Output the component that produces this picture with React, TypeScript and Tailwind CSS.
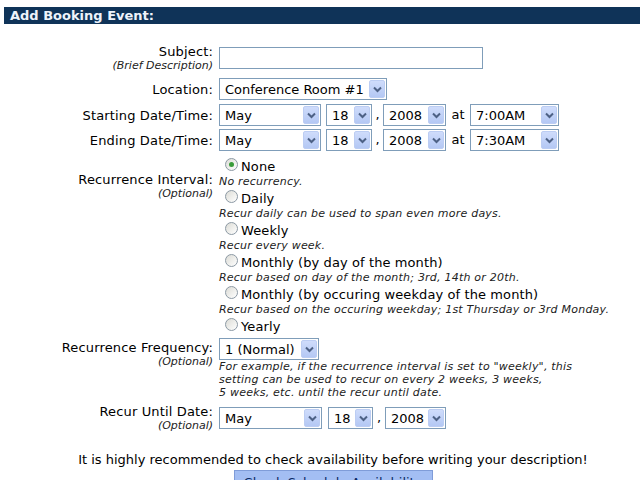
import React from "react";

const F = { fontFamily: '"DejaVu Sans", Verdana, sans-serif' };

function Chevron() {
  return (
    <svg width="9" height="7" viewBox="0 0 9 7">
      <path d="M1 1.5 L4.5 5 L8 1.5" fill="none" stroke="#4d6185" strokeWidth="2" />
    </svg>
  );
}

function Select({ value, w }: { value: string; w: string }) {
  return (
    <div className={`${w} h-[22px] border border-[#7f9db9] bg-white flex items-center justify-between shrink-0`}>
      <span className="pl-[5px] text-[13px] leading-[15px] text-black whitespace-nowrap">{value}</span>
      <div className="w-[16px] h-[18px] mr-[1px] bg-gradient-to-b from-[#cfdcfb] to-[#b4c8f4] border border-[#bccdf3] flex items-center justify-center rounded-[2px]">
        <Chevron />
      </div>
    </div>
  );
}

function Radio({ checked, label }: { checked?: boolean; label: string }) {
  return (
    <div className="flex items-end h-[17px]">
      <div className="ml-[6px] mr-[3px] mb-[3px] w-[13px] h-[13px] rounded-full border border-[#8c99a4] bg-gradient-to-br from-[#dcdcd6] to-white flex items-center justify-center">
        {checked && <div className="w-[5px] h-[5px] rounded-full bg-[#3a9c3a]" />}
      </div>
      <span className="text-[13px] leading-[15px] tracking-[0.1px] text-black">{label}</span>
    </div>
  );
}

function Desc({ children }: { children: React.ReactNode }) {
  return <div className="text-[11px] leading-[15px] italic tracking-[0.22px] text-[#222]">{children}</div>;
}

function Label({ main, sub, className = "" }: { main: string; sub?: string; className?: string }) {
  return (
    <div className={`w-[213px] shrink-0 text-right ${className}`}>
      <div className="text-[13px] leading-[15px] tracking-[0.15px] text-black">{main}</div>
      {sub && <div className="text-[11px] leading-[13px] italic text-[#222]">{sub}</div>}
    </div>
  );
}

export default function App() {
  return (
    <div className="w-[640px] h-[480px] overflow-hidden bg-white" style={F}>
      <div className="mt-[7px] ml-[4px] h-[17px] bg-[#0f3358] flex items-center pl-[6px]">
        <span className="text-[13px] font-bold text-[#eef3fb] leading-[15px]">Add Booking Event:</span>
      </div>

      {/* Subject */}
      <div className="mt-[20px] flex items-center h-[28px]">
        <Label main="Subject:" sub="(Brief Description)" />
        <div className="ml-[6px] w-[264px] h-[22px] border border-[#7f9db9] bg-white" />
      </div>

      {/* Location */}
      <div className="mt-[6px] flex items-center h-[22px]">
        <Label main="Location:" />
        <div className="ml-[6px]">
          <Select value="Conference Room #1" w="w-[168px]" />
        </div>
      </div>

      {/* Starting */}
      <div className="mt-[4px] flex items-center h-[22px]">
        <Label main="Starting Date/Time:" />
        <div className="ml-[6px] flex items-center text-[13px]">
          <Select value="May" w="w-[102px]" />
          <div className="ml-[5px]"><Select value="18" w="w-[46px]" /></div>
          <span className="w-[11px] text-center">,</span>
          <Select value="2008" w="w-[63px]" />
          <span className="w-[24px] text-center">at</span>
          <Select value="7:00AM" w="w-[89px]" />
        </div>
      </div>

      {/* Ending */}
      <div className="mt-[3px] flex items-center h-[22px]">
        <Label main="Ending Date/Time:" />
        <div className="ml-[6px] flex items-center text-[13px]">
          <Select value="May" w="w-[102px]" />
          <div className="ml-[5px]"><Select value="18" w="w-[46px]" /></div>
          <span className="w-[11px] text-center">,</span>
          <Select value="2008" w="w-[63px]" />
          <span className="w-[24px] text-center">at</span>
          <Select value="7:30AM" w="w-[89px]" />
        </div>
      </div>

      {/* Recurrence Interval */}
      <div className="mt-[6px] flex items-start">
        <Label main="Recurrence Interval:" sub="(Optional)" className="pt-[15px]" />
        <div className="ml-[6px]">
          <Radio checked label="None" />
          <Desc>No recurrency.</Desc>
          <Radio label="Daily" />
          <Desc>Recur daily can be used to span even more days.</Desc>
          <Radio label="Weekly" />
          <Desc>Recur every week.</Desc>
          <Radio label="Monthly (by day of the month)" />
          <Desc>Recur based on day of the month; 3rd, 14th or 20th.</Desc>
          <Radio label="Monthly (by occuring weekday of the month)" />
          <Desc>Recur based on the occuring weekday; 1st Thursday or 3rd Monday.</Desc>
          <Radio label="Yearly" />
        </div>
      </div>

      {/* Frequency */}
      <div className="mt-[4px] flex items-start">
        <Label main="Recurrence Frequency:" sub="(Optional)" className="pt-[2px]" />
        <div className="ml-[6px]">
          <Select value="1 (Normal)" w="w-[100px]" />
          <div className="text-[11px] leading-[13px] italic tracking-[0.22px] text-[#222]">
            For example, if the recurrence interval is set to "weekly", this
            <br />
            setting can be used to recur on every 2 weeks, 3 weeks,
            <br />
            5 weeks, etc. until the recur until date.
          </div>
        </div>
      </div>

      {/* Recur Until */}
      <div className="mt-[5px] flex items-center h-[28px]">
        <Label main="Recur Until Date:" sub="(Optional)" />
        <div className="ml-[6px] flex items-center text-[13px]">
          <Select value="May" w="w-[103px]" />
          <div className="ml-[6px]"><Select value="18" w="w-[45px]" /></div>
          <span className="w-[12px] text-center">,</span>
          <Select value="2008" w="w-[61px]" />
        </div>
      </div>

      <div className="mt-[20px] pl-[26px] flex flex-col items-center">
        <div className="text-[13px] leading-[16px] text-black whitespace-nowrap">
          It is highly recommended to check availability before writing your description!
        </div>
        <div className="mt-[2px] w-[199px] h-[22px] bg-[#a3bef3] border border-[#7f9cd8] flex items-start justify-center">
          <span className="text-[13px] leading-[15px] pt-[4px] text-[#0a2a66] whitespace-nowrap">Check Schedule Availability</span>
        </div>
      </div>
    </div>
  );
}
